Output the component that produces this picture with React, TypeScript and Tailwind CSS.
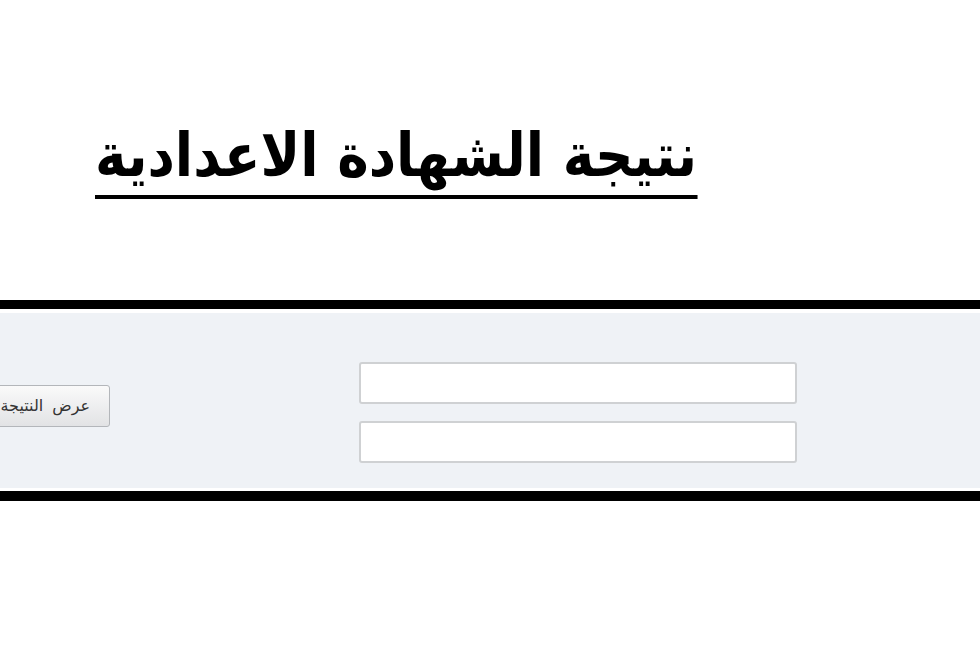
export default function App() {
  return (
    <div className="w-[980px] h-[654px] bg-white overflow-hidden relative" style={{ fontFamily: '"DejaVu Sans", sans-serif' }}>
      {/* heading */}
      <div className="h-[300px] pt-[120px] pl-[95px]">
        <h1
          dir="rtl"
          className="inline-block origin-left scale-x-[0.89] font-bold text-[60px] leading-[70px] text-black border-b-[4px] border-black pb-[5px]"
        >
          نتيجة الشهادة الاعدادية
        </h1>
      </div>

      {/* query band */}
      <div className="border-t-[9px] border-b-[10px] border-black pt-[4px] pb-[3px]">
        <div className="h-[175px] bg-[#eff2f6] flex items-center">
          <button
            dir="rtl"
            className="-ml-[46px] mt-[10px] w-[156px] h-[42px] rounded-[3px] border border-[#b3b6ba] bg-gradient-to-b from-[#fafafa] to-[#e2e3e5] text-[16px] text-[#333] text-right pr-[19px] [word-spacing:4px] whitespace-nowrap overflow-hidden"
          >
            عرض النتيجة
          </button>
          <div className="ml-[249px] flex flex-col gap-[17px] mt-[24px]">
            <input className="w-[438px] h-[42px] bg-white border-2 border-[#cfd1d3] rounded-[3px]" />
            <input className="w-[438px] h-[42px] bg-white border-2 border-[#cfd1d3] rounded-[3px]" />
          </div>
        </div>
      </div>
    </div>
  );
}
